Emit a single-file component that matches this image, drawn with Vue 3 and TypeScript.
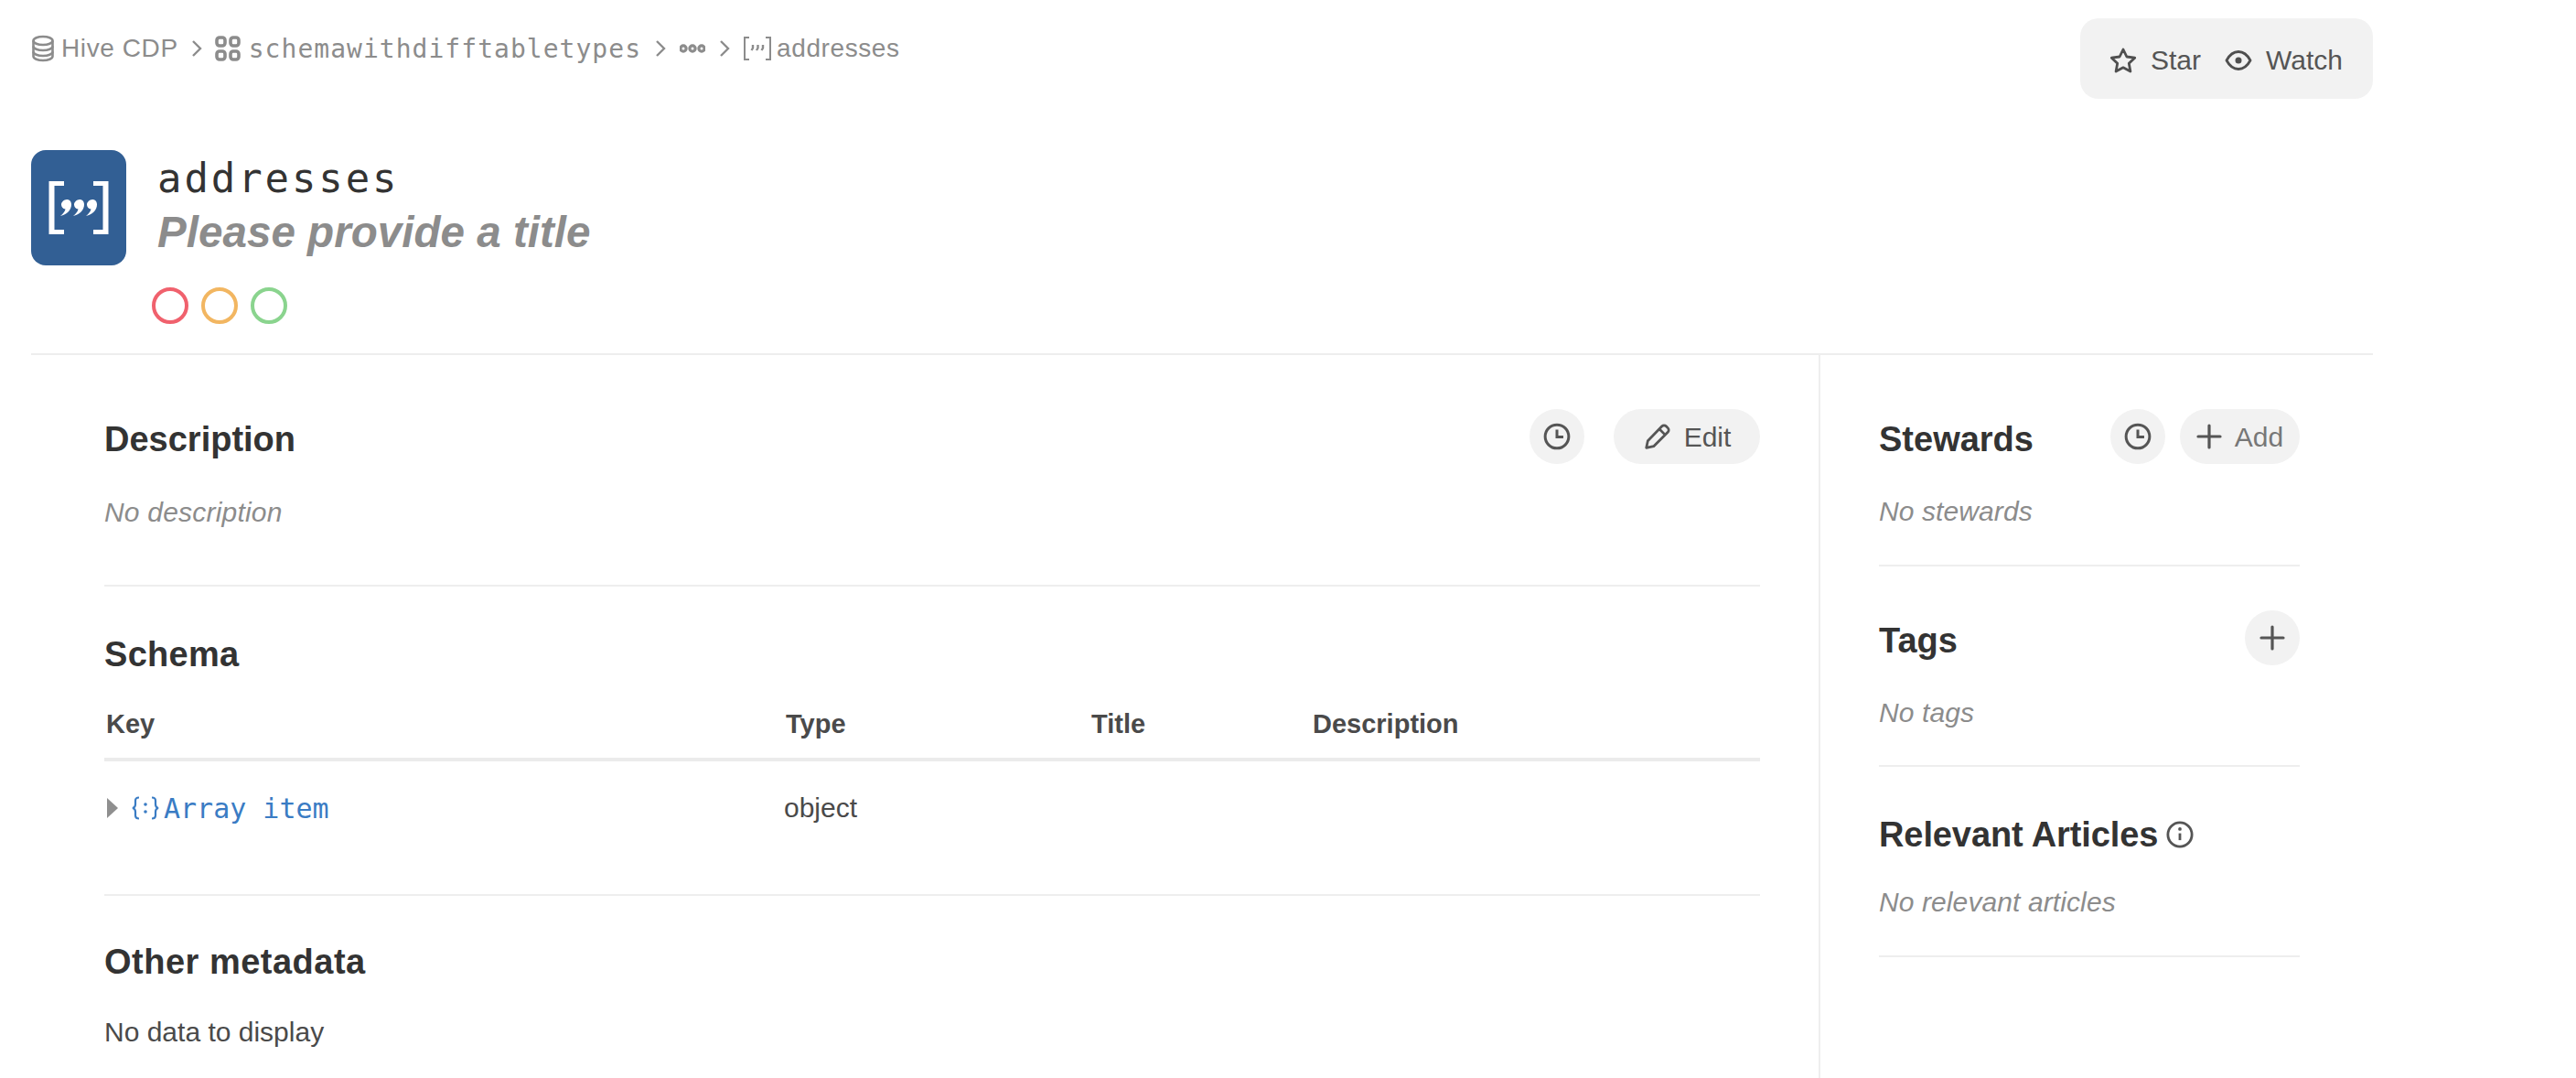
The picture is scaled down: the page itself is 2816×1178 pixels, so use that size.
<script setup lang="ts">
const columns: string[] = ['Key', 'Type', 'Title', 'Description']
const quality: string[] = ['#f0616d', '#f2b661', '#8ad48e']
</script>

<template>
  <div class="page">
    <div class="topbar">
      <nav class="crumbs">
        <svg class="ci" width="26" height="30" viewBox="0 0 26 30" fill="none" stroke="#8c8c8c" stroke-width="2.6">
          <ellipse cx="13" cy="6.5" rx="10.5" ry="4.5" />
          <path d="M2.5 6.5v17c0 2.5 4.7 4.5 10.5 4.5s10.5-2 10.5-4.5v-17" />
          <path d="M2.5 12.5c0 2.5 4.7 4.5 10.5 4.5s10.5-2 10.5-4.5M2.5 18.500c0 2.500 4.700 4.500 10.500 4.500s10.500-2 10.500-4.500" />
        </svg>
        <span class="sans c1">Hive CDP</span>
        <svg class="chev first" width="12" height="22" viewBox="0 0 12 22" fill="none" stroke="#8c8c8c" stroke-width="2.4"><path d="M2 3l8 8-8 8" /></svg>
        <svg class="ci" width="28" height="28" viewBox="0 0 28 28" fill="none" stroke="#8c8c8c" stroke-width="3.6">
          <rect x="2" y="2" width="9" height="9" rx="3" />
          <rect x="17" y="2" width="9" height="9" rx="3" />
          <rect x="2" y="17" width="9" height="9" rx="3" />
          <rect x="17" y="17" width="9" height="9" rx="3" />
        </svg>
        <span class="mono c2">schemawithdifftabletypes</span>
        <svg class="chev" width="12" height="22" viewBox="0 0 12 22" fill="none" stroke="#8c8c8c" stroke-width="2.4"><path d="M2 3l8 8-8 8" /></svg>
        <svg class="dots" width="28" height="10" viewBox="0 0 28 10" fill="#fff" stroke="#8c8c8c" stroke-width="3.200">
          <circle cx="4" cy="5" r="3.100" /><circle cx="14" cy="5" r="3.100" /><circle cx="24" cy="5" r="3.100" />
        </svg>
        <svg class="chev" width="12" height="22" viewBox="0 0 12 22" fill="none" stroke="#8c8c8c" stroke-width="2.4"><path d="M2 3l8 8-8 8" /></svg>
        <svg class="ci" width="30" height="26" viewBox="0 0 30 26" fill="none" stroke="#8c8c8c" stroke-width="2">
          <path d="M6 1H1v24h5M24 1h5v24h-5" />
          <path d="M10 9v3.500l-1.500 2.500M15.500 9v3.500L14 15M21 9v3.500L19.500 15" stroke-width="2.400" />
        </svg>
        <span class="sans c3">addresses</span>
      </nav>
      <div class="actions">
        <button class="act">
          <svg width="30" height="28" viewBox="0 0 30 28" fill="none" stroke="#4f4f4f" stroke-width="2.800" stroke-linejoin="round">
            <path d="M15 2l3.900 8 8.800 1.200-6.400 6.100 1.600 8.700L15 21.800 7.100 26l1.600-8.700L2.300 11.200l8.800-1.200z" />
          </svg>
          <span>Star</span>
        </button>
        <button class="act">
          <svg width="30" height="24" viewBox="0 0 30 24" fill="none" stroke="#4f4f4f" stroke-width="2.800" stroke-linejoin="round">
            <path d="M2 12C5.500 5.500 10 2.500 15 2.500S24.500 5.500 28 12c-3.500 6.500-8 9.500-13 9.500S5.500 18.500 2 12z" />
            <circle cx="15" cy="12" r="3.500" fill="#4f4f4f" stroke="none" />
          </svg>
          <span>Watch</span>
        </button>
      </div>
    </div>

    <header class="hero">
      <div class="logo">
        <svg width="66" height="58" viewBox="0 0 66 58" fill="none">
          <path d="M17 2H3.500v54H17M49 2h13.500v54H49" stroke="#fff" stroke-width="6" />
          <path d="M20 20c3 0 5 2.200 5 5.500 0 6-5 11-12 12.500 3-2.500 5-5 5.500-7.500-3-.3-4.500-2.500-4.500-5S17 20 20 20zM34 20c3 0 5 2.200 5 5.500 0 6-5 11-12 12.500 3-2.500 5-5 5.500-7.500-3-.3-4.500-2.500-4.500-5S31 20 34 20zM48 20c3 0 5 2.200 5 5.500 0 6-5 11-12 12.500 3-2.500 5-5 5.500-7.500-3-.3-4.500-2.500-4.500-5S45 20 48 20z" fill="#fff" />
        </svg>
      </div>
      <div class="titles">
        <div class="name">addresses</div>
        <div class="subtitle">Please provide a title</div>
        <div class="rings">
          <span v-for="c in quality" :key="c" class="ring" :style="{ borderColor: c }"></span>
        </div>
      </div>
    </header>

    <div class="body">
      <main class="main">
        <section class="sec sec-desc">
          <div class="sec-head">
            <h2>Description</h2>
            <div class="btns">
              <button class="round">
                <svg width="30" height="30" viewBox="0 0 28 28" fill="none" stroke="#555" stroke-width="2.800"><circle cx="14" cy="14" r="12" /><path d="M14 7v7.500h6.500" /></svg>
              </button>
              <button class="pill edit">
                <svg width="32" height="32" viewBox="0 0 30 30" fill="none" stroke="#555" stroke-width="2.600" stroke-linejoin="round"><path d="M3.500 26.500l1.500-7L19.500 4.500a3 3 0 0 1 4.300 0l1.700 1.700a3 3 0 0 1 0 4.300L11 25zM17 7.500l5.500 5.500" /></svg>
                <span>Edit</span>
              </button>
            </div>
          </div>
          <p class="empty">No description</p>
        </section>

        <section class="sec sec-schema">
          <h2>Schema</h2>
          <div class="thead">
            <span v-for="c in columns" :key="c">{{ c }}</span>
          </div>
          <div class="trow">
            <span class="keycell">
              <svg class="tri" width="14" height="24" viewBox="0 0 14 24" fill="#8f8f8f"><path d="M1 1l12 11L1 23z" /></svg>
              <svg class="objicon" width="30" height="26" viewBox="0 0 30 26" fill="none" stroke="#3a7cc4" stroke-width="2.200">
                <path d="M8 1.500c-3 0-4 1-4 3.500v4c0 2-1 3.500-3 4 2 .5 3 2 3 4v4c0 2.500 1 3.500 4 3.500M22 1.500c3 0 4 1 4 3.500v4c0 2 1 3.500 3 4-2 .5-3 2-3 4v4c0 2.500-1 3.500-4 3.500" />
                <circle cx="15" cy="9" r="1.800" fill="#3a7cc4" stroke="none" /><circle cx="15" cy="17" r="1.800" fill="#3a7cc4" stroke="none" />
              </svg>
              <span class="keyname">Array item</span>
            </span>
            <span class="typecell">object</span>
          </div>
        </section>

        <section class="sec sec-other">
          <h2>Other metadata</h2>
          <p class="nodata">No data to display</p>
        </section>
      </main>

      <aside class="side">
        <section class="block b1">
          <div class="sec-head">
            <h2>Stewards</h2>
            <div class="btns tight">
              <button class="round">
                <svg width="30" height="30" viewBox="0 0 28 28" fill="none" stroke="#555" stroke-width="2.800"><circle cx="14" cy="14" r="12" /><path d="M14 7v7.500h6.500" /></svg>
              </button>
              <button class="pill add">
                <svg width="28" height="28" viewBox="0 0 28 28" fill="none" stroke="#555" stroke-width="3.200" stroke-linecap="round"><path d="M14 2v24M2 14h24" /></svg>
                <span>Add</span>
              </button>
            </div>
          </div>
          <p class="empty">No stewards</p>
        </section>
        <section class="block b2">
          <div class="sec-head">
            <h2>Tags</h2>
            <button class="round">
              <svg width="28" height="28" viewBox="0 0 28 28" fill="none" stroke="#555" stroke-width="3.200" stroke-linecap="round"><path d="M14 2v24M2 14h24" /></svg>
            </button>
          </div>
          <p class="empty">No tags</p>
        </section>
        <section class="block b3">
          <div class="art-head">
            <h2>Relevant Articles</h2>
            <svg width="30" height="30" viewBox="0 0 32 32" fill="none" stroke="#555" stroke-width="3"><circle cx="16" cy="16" r="14" /><path d="M16 14.500v8" /><circle cx="16" cy="9.500" r="2" fill="#555" stroke="none" /></svg>
          </div>
          <p class="empty">No relevant articles</p>
        </section>
      </aside>
    </div>
  </div>
</template>

<style>
html, body { background: #fff; margin: 0; overflow: hidden; }
</style>

<style scoped>
.page {
  width: 2816px;
  height: 1178px;
  box-sizing: border-box;
  padding: 20px 222px 0 34px;
  overflow: hidden;
  display: flex;
  flex-direction: column;
  font-family: "Liberation Sans", Arial, sans-serif;
  color: #333;
}
.topbar { display: flex; justify-content: space-between; align-items: flex-start; height: 88px; }
.crumbs { display: flex; align-items: center; height: 66px; color: #8c8c8c; font-size: 28px; white-space: nowrap; }
.sans { font-family: "Liberation Sans", Arial, sans-serif; letter-spacing: 0.6px; }
.mono { font-family: "DejaVu Sans Mono", monospace; font-size: 28px; letter-spacing: 1.03px; }
.c1 { margin-left: 7px; }
.c2 { margin-left: 9px; }
.c3 { margin-left: 6px; }
.chev { margin: 0 15px; }
.chev.first { margin: 0 14px; }
.actions { display: flex; align-items: center; gap: 26px; width: 320px; height: 88px; box-sizing: border-box; padding: 4px 32px 0; background: #f2f2f2; border-radius: 20px; }
.act { display: flex; align-items: center; gap: 15px; border: 0; background: none; padding: 0; font: inherit; font-size: 30px; color: #555; }
.hero { display: flex; align-items: flex-start; margin-top: 56px; height: 222px; border-bottom: 2px solid #eee; }
.logo { width: 104px; height: 126px; background: #325f94; border-radius: 16px; display: flex; align-items: center; justify-content: center; }
.titles { margin-left: 34px; }
.name { font-family: "DejaVu Sans Mono", monospace; font-size: 44px; letter-spacing: 2.900px; line-height: 58px; padding-top: 2px; margin-bottom: 2px; color: #333; }
.subtitle { font-size: 47.6px; line-height: 56px; font-weight: 700; font-style: italic; color: #8c8c8c; }
.rings { display: flex; gap: 14px; margin-top: 32px; margin-left: -6px; }
.ring { width: 40px; height: 40px; box-sizing: border-box; border: 4px solid; border-radius: 50%; }
.body { display: grid; grid-template-columns: 1956px 1fr; flex: 1; min-height: 0; }
.main { border-right: 2px solid #eee; padding: 1px 64px 0 80px; }
.side { padding: 1px 80px 0 64px; }
h2 { margin: 0; font-size: 38px; font-weight: 700; color: #333; line-height: 46px; }
.sec-head { display: flex; justify-content: space-between; align-items: center; height: 60px; }
.sec-head h2 { padding-top: 5px; }
.art-head h2 { letter-spacing: -0.1px; }
.btns { display: flex; gap: 32px; }
.btns.tight { gap: 16px; }
.round { width: 60px; height: 60px; padding: 0; border: 0; border-radius: 50%; background: #f2f2f2; display: flex; align-items: center; justify-content: center; }
.pill { height: 60px; border: 0; border-radius: 30px; background: #f2f2f2; display: flex; align-items: center; justify-content: center; gap: 14px; font: inherit; font-size: 30px; color: #555; padding: 0; }
.pill span { padding-top: 2px; }
.edit { width: 160px; gap: 13px; }
.add { width: 131px; color: #777; }
.empty { margin: 0; font-size: 30px; line-height: 40px; font-style: italic; color: #8c8c8c; letter-spacing: 0.1px; }
.sec { border-bottom: 2px solid #eee; box-sizing: border-box; }
.sec-desc { height: 252px; padding-top: 58px; }
.sec-desc .empty { margin-top: 33px; letter-spacing: 0.2px; }
.sec-schema { height: 338px; padding-top: 51px; }
.sec-schema h2 { letter-spacing: 0.3px; }
.thead, .trow { display: grid; grid-template-columns: 743px 334px 242px 1fr; }
.thead { margin-top: 31px; height: 63px; line-height: 44px; box-sizing: border-box; border-bottom: 4px solid #ebebeb; font-size: 29px; font-weight: 700; color: #4a4a4a; padding-left: 2px; }
.trow { margin-top: 29px; height: 44px; align-items: center; }
.keycell { display: flex; align-items: center; }
.tri { margin-left: 2px; }
.objicon { margin-left: 14px; }
.keyname { font-family: "DejaVu Sans Mono", monospace; font-size: 30px; color: #3a7cc4; margin-left: 5px; }
.typecell { font-size: 30px; color: #4a4a4a; }
.sec-other { border: 0; padding-top: 49px; }
.sec-other h2 { letter-spacing: 0.5px; }
.nodata { margin: 34px 0 0; font-size: 30px; line-height: 40px; color: #4a4a4a; }
.block { border-bottom: 2px solid #eee; box-sizing: border-box; }
.b1 { height: 230px; padding-top: 58px; }
.b2 { height: 219px; padding-top: 48px; }
.b3 { height: 208px; padding-top: 51px; }
.block .empty { margin-top: 32px; }
.b3 .empty { margin-top: 31px; }
.art-head { display: flex; align-items: center; gap: 9px; height: 46px; }
</style>
